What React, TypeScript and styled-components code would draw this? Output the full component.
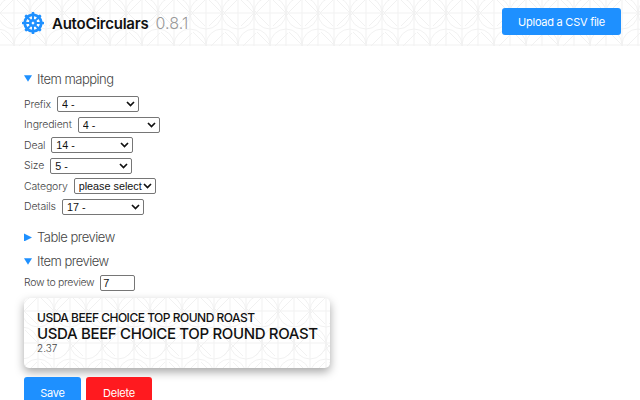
import { useState } from 'react'
import styled, { createGlobalStyle } from 'styled-components'
import { FaDharmachakra } from 'react-icons/fa'

//#region STYLE
const patternSvg = encodeURIComponent(
	`<svg xmlns='http://www.w3.org/2000/svg' width='32' height='64' viewBox='0 0 32 64'><g fill='none' stroke='#f1f1f1' stroke-width='1'><circle cx='14' cy='13' r='16'/><circle cx='46' cy='13' r='16'/><circle cx='-18' cy='13' r='16'/><circle cx='30' cy='45' r='16'/><circle cx='-2' cy='45' r='16'/><circle cx='30' cy='-19' r='16'/><circle cx='-2' cy='-19' r='16'/><circle cx='14' cy='77' r='16'/><path d='M14 0V64M30 0V64M0 13H32M0 45H32M17 0L43 26M-13 0L13 26M43 0L17 26M13 0L-13 26M1 32L27 58M33 32L7 58'/></g></svg>`,
)

const chevronSvg = encodeURIComponent(
	`<svg xmlns='http://www.w3.org/2000/svg' width='9' height='6' viewBox='0 0 9 6'><path d='M1 1l3.5 3.5L8 1' fill='none' stroke='#111' stroke-width='1.7'/></svg>`,
)

const GlobalStyle = createGlobalStyle`
	html, body {
		margin: 0;
		padding: 0;
		background: #fff;
		overflow: hidden;
	}
	body {
		font-family: Inter, "Liberation Sans", sans-serif;
		color: #111;
	}
`

const Patterned = styled.div`
	background-color: #fff;
	background-image: url("data:image/svg+xml,${patternSvg}");
`

const Page = styled.div`
	width: 640px;
	height: 400px;
	overflow: hidden;
`

const Header = styled(Patterned)`
	height: 46px;
	padding: 8px 19px 0 22px;
	box-sizing: border-box;
	display: flex;
	justify-content: space-between;
	align-items: flex-start;
`

const Brand = styled.div`
	display: flex;
	align-items: center;
	height: 29px;
	gap: 8px;
	color: #1e90ff;
	font-size: 22px;
`

const Title = styled.h1`
	margin: 0;
	font-size: 15px;
	font-weight: 600;
	color: #111;
	letter-spacing: -0.25px;
`

const Version = styled.span`
	font-size: 16px;
	font-weight: 300;
	color: #999;
	margin-left: 7px;
	letter-spacing: 0.1px;
`

const Button = styled.button<{ $color: string; $width: number; $height: number }>`
	width: ${p => p.$width}px;
	height: ${p => p.$height}px;
	padding: 0;
	border: none;
	border-radius: 3px;
	background: ${p => p.$color};
	color: #fff;
	font-family: inherit;
	font-size: 11px;
	font-weight: 400;
	letter-spacing: -0.25px;
`

const Content = styled.main`
	padding: 24px 24px 0;
`

const Section = styled.details`
	margin-bottom: 7px;
`

const Summary = styled.summary`
	display: flex;
	align-items: center;
	gap: 5px;
	height: 17px;
	font-size: 13px;
	font-weight: 300;
	color: #444;
	list-style: none;
	cursor: pointer;
	letter-spacing: -0.5px;
	&::-webkit-details-marker {
		display: none;
	}
`

const Triangle = styled.i<{ $open: boolean }>`
	display: block;
	width: 8px;
	height: 8px;
	background: #1e90ff;
	clip-path: ${p => (p.$open ? 'polygon(0 10%, 100% 10%, 50% 90%)' : 'polygon(0 0, 100% 50%, 0 100%)')};
`

const Fields = styled.div`
	display: flex;
	flex-direction: column;
	gap: 4.6px;
	padding-top: 9px;
	margin-bottom: 14px;
`

const Field = styled.label`
	display: flex;
	align-items: center;
	gap: 6px;
	height: 16px;
	font-size: 10.5px;
	font-weight: 300;
	color: #444;
	letter-spacing: -0.15px;
`

const Select = styled.select<{ $width: number }>`
	appearance: none;
	width: ${p => p.$width}px;
	height: 16px;
	box-sizing: border-box;
	padding: 0 0 0 4px;
	border: 1px solid #767676;
	border-radius: 2px;
	background: #fff url("data:image/svg+xml,${chevronSvg}") no-repeat right 3px center;
	color: #111;
	font-family: "Liberation Sans", sans-serif;
	font-size: 10.8px;
`

const NumberInput = styled.input`
	width: 35px;
	height: 16px;
	box-sizing: border-box;
	padding: 0 2px;
	border: 1px solid #767676;
	border-radius: 2px;
	font-family: "Liberation Sans", sans-serif;
	font-size: 11px;
	color: #111;
`

const PreviewRow = styled(Field)`
	margin-top: 5px;
	letter-spacing: -0.32px;
`

const Card = styled(Patterned)`
	width: 306px;
	height: 70px;
	margin-top: 7px;
	padding: 12px 13px 0;
	box-sizing: border-box;
	border-radius: 5px;
	box-shadow: 0 4px 10px rgba(0, 0, 0, 0.35);
`

const CardLine = styled.div<{ $size: number; $spacing: number }>`
	font-size: ${p => p.$size}px;
	line-height: ${p => p.$size + 3}px;
	font-weight: 500;
	color: #111;
	white-space: nowrap;
	letter-spacing: ${p => p.$spacing}px;
`

const CardPrice = styled.div`
	font-size: 10px;
	line-height: 11px;
	font-weight: 300;
	color: #444;
`

const Actions = styled.div`
	display: flex;
	gap: 5px;
	margin-top: 9px;
`
//#endregion

const fields = [
	{ label: 'Prefix', value: '4 -' },
	{ label: 'Ingredient', value: '4 -' },
	{ label: 'Deal', value: '14 -' },
	{ label: 'Size', value: '5 -' },
	{ label: 'Category', value: 'please select' },
	{ label: 'Details', value: '17 -' },
]

const App = () => {
	const [row, setRow] = useState('7')

	return (
		<Page>
			<GlobalStyle />
			<Header>
				<Brand>
					<FaDharmachakra />
					<Title>
						AutoCirculars<Version>0.8.1</Version>
					</Title>
				</Brand>
				<Button $color='#1e90ff' $width={119} $height={27}>Upload a CSV file</Button>
			</Header>
			<Content>
				<Section open>
					<Summary><Triangle $open />Item mapping</Summary>
					<Fields>
						{fields.map(field => (
							<Field key={field.label}>
								{field.label}
								<Select $width={82} defaultValue={field.value}>
									<option>{field.value}</option>
								</Select>
							</Field>
						))}
					</Fields>
				</Section>
				<Section>
					<Summary><Triangle $open={false} />Table preview</Summary>
				</Section>
				<Section open>
					<Summary><Triangle $open />Item preview</Summary>
					<PreviewRow>
						Row to preview
						<NumberInput value={row} onChange={e => setRow(e.target.value)} />
					</PreviewRow>
					<Card>
						<CardLine $size={12} $spacing={-0.5}>USDA BEEF CHOICE TOP ROUND ROAST</CardLine>
						<CardLine $size={15} $spacing={-0.35}>USDA BEEF CHOICE TOP ROUND ROAST</CardLine>
						<CardPrice>2.37</CardPrice>
					</Card>
					<Actions>
						<Button $color='#1e90ff' $width={57} $height={32}>Save</Button>
						<Button $color='#ff1a1f' $width={66} $height={32}>Delete</Button>
					</Actions>
				</Section>
			</Content>
		</Page>
	)
}

export default App
